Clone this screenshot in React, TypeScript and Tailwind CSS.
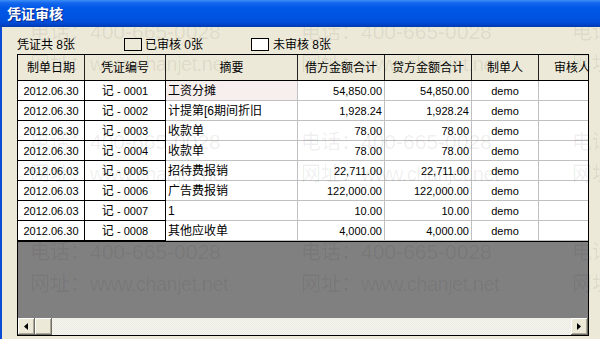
const rows = [
  ['2012.06.30', '0001', '工资分摊', '54,850.00', '54,850.00', 'demo'],
  ['2012.06.30', '0002', '计提第[6期间折旧', '1,928.24', '1,928.24', 'demo'],
  ['2012.06.30', '0003', '收款单', '78.00', '78.00', 'demo'],
  ['2012.06.30', '0004', '收款单', '78.00', '78.00', 'demo'],
  ['2012.06.03', '0005', '招待费报销', '22,711.00', '22,711.00', 'demo'],
  ['2012.06.03', '0006', '广告费报销', '122,000.00', '122,000.00', 'demo'],
  ['2012.06.03', '0007', '1', '10.00', '10.00', 'demo'],
  ['2012.06.30', '0008', '其他应收单', '4,000.00', '4,000.00', 'demo'],
];

// 表头: 标题 + 宽度(含右边框)
const headers = [
  { label: '制单日期', w: 'w-[67px]' },
  { label: '凭证编号', w: 'w-[81px]' },
  { label: '摘要', w: 'w-[132px]' },
  { label: '借方金额合计', w: 'w-[87px]' },
  { label: '贷方金额合计', w: 'w-[87px]' },
  { label: '制单人', w: 'w-[67px]' },
  { label: '审核人', w: 'w-[67px]' },
];

const Watermark = () => (
  <div className="absolute inset-0 pointer-events-none overflow-hidden">
    <div className="flex flex-col pl-[30px] pt-[16px] text-black/[0.07] leading-[29px]">
      {[0, 1, 2].map((r) => (
        <div key={r} className="flex h-[110px] shrink-0">
          {[0, 1, 2].map((c) => (
            <div key={c} className="w-[271px] shrink-0 whitespace-nowrap">
              <div>
                <span className="text-[20px] font-['Noto_Sans_CJK_SC',sans-serif]">电话：</span>
                <span className="text-[21px]">400-665-0028</span>
              </div>
              <div>
                <span className="text-[20px] font-['Noto_Sans_CJK_SC',sans-serif]">网址：</span>
                <span className="text-[20px] tracking-[-0.5px]">www.chanjet.net</span>
              </div>
            </div>
          ))}
        </div>
      ))}
    </div>
  </div>
);

const ScrollButton = ({ dir }: { dir: 'left' | 'right' }) => (
  <div className="w-[17px] h-[17px] shrink-0 bg-[#ece9d8] border-r border-b border-[#716f64] shadow-[inset_1px_1px_0_#ffffff,inset_-1px_-1px_0_#aca899] flex items-center justify-center">
    <svg width="4" height="7" viewBox="0 0 4 7">
      {dir === 'left' ? <polygon points="4,0 4,7 0,3.5" fill="#000" /> : <polygon points="0,0 0,7 4,3.5" fill="#000" />}
    </svg>
  </div>
);

export default function App() {
  return (
    <div className="relative w-[600px] h-[339px] overflow-hidden bg-[#ece9d8] text-black font-['Liberation_Sans','Noto_Sans_CJK_SC',sans-serif]">
      {/* 标题栏 */}
      <div className="relative z-20 h-[27px] flex items-center pl-[7px] pb-[1px] bg-[linear-gradient(to_bottom,#3c8ef7_0px,#1466ec_3px,#0058e7_8px,#0054e3_16px,#004ed9_22px,#0042c4_25px,#003aae_27px)]">
        <span className="text-white font-bold text-[14px] font-['Noto_Sans_CJK_SC',sans-serif] [text-shadow:1px_1px_0_#0a2a8c]">凭证审核</span>
      </div>

      <div className="flex h-[312px]">
        <div className="w-[2px] bg-[#0a4bd6] shrink-0" />
        <div className="flex-1 pl-[15px]">
          {/* 状态行 */}
          <div className="h-[27px] pt-[8px] flex items-center text-[12px]">
            <div className="w-[107px] whitespace-nowrap">凭证共 8张</div>
            <div className="w-[127px] flex items-center gap-[3px] whitespace-nowrap">
              <div className="w-[18px] h-[13px] border border-black bg-[#ece9d8]" />
              <span>已审核 0张</span>
            </div>
            <div className="flex items-center gap-[4px] whitespace-nowrap">
              <div className="w-[18px] h-[13px] border border-black bg-white" />
              <span>未审核 8张</span>
            </div>
          </div>

          {/* 表格 */}
          <div className="w-[572px] h-[282px] border border-black overflow-hidden flex flex-col">
            <div className="flex h-[26px] shrink-0 border-b border-black bg-[#ece9d8]">
              {headers.map((h) => (
                <div
                  key={h.label}
                  className={`${h.w} shrink-0 border-r border-[#222] flex items-center justify-center pt-[1px] text-[12px] whitespace-nowrap`}
                >
                  {h.label}
                </div>
              ))}
            </div>

            {rows.map((r, i) => (
              <div key={i} className="flex h-[20px] shrink-0 bg-white">
                <div className="w-[67px] shrink-0 border-r border-b border-black flex items-center justify-center pt-[1px] text-[11px]">
                  {r[0]}
                </div>
                <div className="w-[81px] shrink-0 border-r border-b border-black flex items-center justify-center pt-[1px] text-[11px] whitespace-nowrap">
                  <span className="text-[12px]">记</span>&nbsp;-&nbsp;{r[1]}
                </div>
                <div
                  className={`w-[132px] shrink-0 border-r border-b border-[#c0c0c0] flex items-center pl-[2px] pt-[1px] text-[12px] whitespace-nowrap ${i === 0 ? 'bg-[#f7eeee]' : ''}`}
                >
                  {r[2]}
                </div>
                <div className="w-[87px] shrink-0 border-r border-b border-[#c0c0c0] flex items-center justify-end pr-[2px] pt-[1px] text-[11px]">
                  {r[3]}
                </div>
                <div className="w-[87px] shrink-0 border-r border-b border-[#c0c0c0] flex items-center justify-end pr-[2px] pt-[1px] text-[11px]">
                  {r[4]}
                </div>
                <div className="w-[67px] shrink-0 border-r border-b border-[#c0c0c0] flex items-center justify-center pt-[1px] text-[11px]">
                  {r[5]}
                </div>
                <div className="w-[67px] shrink-0 border-r border-b border-[#c0c0c0]" />
              </div>
            ))}

            <div className="h-[1px] shrink-0 bg-black" />
            <div className="flex-1 bg-[#808080]" />

            {/* 水平滚动条 */}
            <div className="h-[17px] shrink-0 flex bg-[#f4f3ee]">
              <ScrollButton dir="left" />
              <div className="w-[17px] h-[17px] shrink-0 bg-[#ece9d8] border-r border-b border-[#716f64] shadow-[inset_1px_1px_0_#ffffff,inset_-1px_-1px_0_#aca899]" />
              <div className="flex-1 bg-[repeating-conic-gradient(#f7f6f1_0%_25%,#ebeae2_0%_50%)] bg-[length:2px_2px]" />
              <ScrollButton dir="right" />
            </div>
          </div>
        </div>
      </div>

      <Watermark />
    </div>
  );
}
